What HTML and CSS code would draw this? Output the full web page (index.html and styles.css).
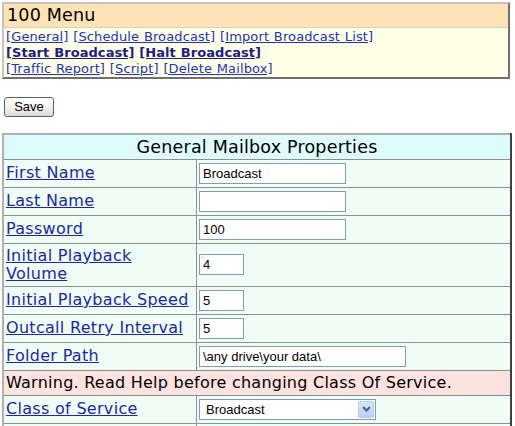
FILE: index.html
```html
<!DOCTYPE html>
<html>
<head>
<meta charset="utf-8">
<title>100 Menu</title>
<link rel="stylesheet" href="styles.css">
</head>
<body>
<div class="menu">
  <div class="menu-title">100 Menu</div>
  <div class="menu-links">
    <div><a href="#">[General]</a> <a href="#">[Schedule Broadcast]</a> <a href="#">[Import Broadcast List]</a></div>
    <div><a href="#" class="strong">[Start Broadcast]</a> <a href="#" class="strong">[Halt Broadcast]</a></div>
    <div><a href="#">[Traffic Report]</a> <a href="#">[Script]</a> <a href="#">[Delete Mailbox]</a></div>
  </div>
</div>

<div class="actions"><button class="btn" type="button">Save</button></div>

<table class="props">
  <tr><th colspan="2" class="head">General Mailbox Properties</th></tr>
  <tr><td class="lbl"><a href="#">First Name</a></td><td class="val"><input class="in in-md" value="Broadcast"></td></tr>
  <tr><td class="lbl"><a href="#">Last Name</a></td><td class="val"><input class="in in-md" value=""></td></tr>
  <tr><td class="lbl"><a href="#">Password</a></td><td class="val"><input class="in in-md" value="100"></td></tr>
  <tr><td class="lbl"><a href="#">Initial Playback Volume</a></td><td class="val"><input class="in in-sm" value="4"></td></tr>
  <tr><td class="lbl"><a href="#">Initial Playback Speed</a></td><td class="val"><input class="in in-sm" value="5"></td></tr>
  <tr><td class="lbl"><a href="#">Outcall Retry Interval</a></td><td class="val"><input class="in in-sm" value="5"></td></tr>
  <tr><td class="lbl"><a href="#">Folder Path</a></td><td class="val"><input class="in in-lg" value="\any drive\your data\"></td></tr>
  <tr><td colspan="2" class="warn">Warning. Read Help before changing Class Of Service.</td></tr>
  <tr><td class="lbl"><a href="#">Class of Service</a></td><td class="val">
    <div class="select"><span class="select-text">Broadcast</span><span class="select-btn"><svg width="9" height="6" viewBox="0 0 9 6"><path d="M1 1 L4.5 4.5 L8 1" fill="none" stroke="#4d6185" stroke-width="2"/></svg></span></div>
  </td></tr>
  <tr><td class="lbl">&nbsp;</td><td class="val">&nbsp;</td></tr>
</table>
</body>
</html>
```

FILE: styles.css
```css
html, body {
  background: #ffffff;
}
body {
  margin: 2px 0 0 2px;
  font-family: "DejaVu Sans", Verdana, sans-serif;
  color: #000;
}
a {
  color: #2233b8;
}
.menu {
  width: 508px;
  box-sizing: border-box;
  border: 2px solid;
  border-color: #c4c4c4 #707070 #707070 #c4c4c4;
}
.menu-title {
  background: #fde3b5;
  font-size: 17.5px;
  line-height: 23px;
  padding: 0 3px;
  letter-spacing: 0.2px;
  border-bottom: 1px solid #d8d0c0;
}
.menu-links {
  background: #ffffe8;
  font-size: 13px;
  line-height: 16px;
  letter-spacing: 0.12px;
  word-spacing: 0.5px;
  padding: 1px 2px 0;
}
.menu-links a.strong {
  font-weight: bold;
  letter-spacing: 0.05px;
  color: #1c2080;
}
.actions {
  margin: 17px 0 0 2px;
}
.btn {
  width: 50px;
  height: 20px;
  padding: 0;
  font-family: "Liberation Sans", Arial, sans-serif;
  font-size: 13px;
  color: #000;
  background: linear-gradient(#ffffff, #f0efe8 60%, #dcdad0);
  border: 1px solid #4f6177;
  border-radius: 3px;
}
.props {
  margin-top: 16px;
  width: 510px;
  border-collapse: collapse;
  border: 2px solid;
  border-color: #b0b0b0 #404040 #404040 #b0b0b0;
}
.props td, .props th {
  border: 1px solid #8e8e8e;
}
.head {
  background: #defcfe;
  font-size: 17.5px;
  font-weight: normal;
  letter-spacing: 0.2px;
  line-height: 21px;
  padding: 2px 0 1px;
  text-align: center;
}
.lbl {
  width: 188px;
  background: #f0fcf6;
  font-size: 16px;
  line-height: 18px;
  letter-spacing: 0.3px;
  padding: 3px 2px 3px 2px;
  vertical-align: middle;
}
.lbl a {
  color: #1c2a98;
}
.val {
  background: #f0fcf6;
  padding: 3px 2px 3px 2px;
  vertical-align: middle;
}
.warn {
  background: #fde3e0;
  font-size: 16px;
  line-height: 18px;
  letter-spacing: 0.25px;
  padding: 3px 2px;
}
.in {
  display: block;
  box-sizing: border-box;
  height: 21px;
  margin: 0;
  padding: 1px 3px;
  border: 1px solid #7f9db9;
  background: #fff;
  font-family: "Liberation Sans", Arial, sans-serif;
  font-size: 13px;
  color: #000;
}
.in-md { width: 147px; }
.in-sm { width: 45px; }
.in-lg { width: 207px; }
.select {
  display: flex;
  align-items: center;
  box-sizing: border-box;
  width: 177px;
  height: 21px;
  border: 1px solid #7f9db9;
  background: #fff;
  font-family: "Liberation Sans", Arial, sans-serif;
  font-size: 13px;
}
.select-text {
  flex: 1;
  padding-left: 6px;
}
.select-btn {
  display: flex;
  align-items: center;
  justify-content: center;
  width: 16px;
  height: 17px;
  margin-right: 1px;
  box-sizing: border-box;
  border: 1px solid #b9c9ef;
  border-radius: 2px;
  background: linear-gradient(#dbe6fd, #bccffa);
}
```
